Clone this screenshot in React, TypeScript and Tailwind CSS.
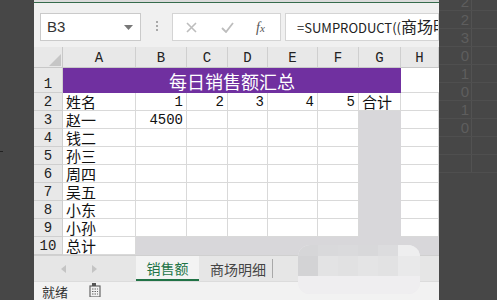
const mono = "font-['Liberation_Mono',monospace]"
const cjk = "font-['Noto_Sans_CJK_SC',sans-serif]"

const colW = ["w-[73px]", "w-[51px]", "w-[41px]", "w-[40px]", "w-[50px]", "w-[41px]", "w-[42px]", "flex-1"]
const letters = ["A", "B", "C", "D", "E", "F", "G", "H"]

const rows: string[][] = [
  ["姓名", "1", "2", "3", "4", "5", "合计", ""],
  ["赵一", "4500", "", "", "", "", "", ""],
  ["钱二"],
  ["孙三"],
  ["周四"],
  ["吴五"],
  ["小东"],
  ["小孙"],
  ["总计"],
]

const sideNums = ["2", "2", "3", "0", "1", "0", "1", "0", "", ""]

function FormulaBar() {
  return (
    <div className="h-[44px] bg-[#f0f0f0] flex items-start pt-[10px] pl-[6px]">
      <div className="w-[101px] h-[28px] bg-white border border-[#cacaca] flex items-center justify-between pl-[6px] pr-[7px]">
        <span className="font-['Liberation_Sans',sans-serif] text-[15px] text-[#333]">B3</span>
        <svg width="9" height="5" viewBox="0 0 9 5"><path d="M0 0h9L4.5 5z" fill="#777" /></svg>
      </div>
      <div className="ml-[15px] mt-[8px] flex flex-col gap-[2px]">
        <div className="w-[2px] h-[2px] bg-[#a8a8a8]" />
        <div className="w-[2px] h-[2px] bg-[#a8a8a8]" />
        <div className="w-[2px] h-[2px] bg-[#a8a8a8]" />
      </div>
      <div className="ml-[14px] w-[109px] h-[28px] bg-white border border-[#d4d4d4] flex items-center pl-[13px]">
        <svg width="11" height="11" viewBox="0 0 11 11"><path d="M1 1l9 9M10 1l-9 9" stroke="#bdbdbd" strokeWidth="1.6" /></svg>
        <svg className="ml-[24px]" width="13" height="11" viewBox="0 0 13 11"><path d="M1 6l4 4 7-9" stroke="#bdbdbd" strokeWidth="1.8" fill="none" /></svg>
        <span className="ml-[22px] font-['Liberation_Serif',serif] italic text-[14px] text-[#555]">f<span className="text-[11px]">x</span></span>
      </div>
      <div className="ml-[4px] flex-1 h-[28px] bg-white border border-[#d4d4d4] pl-[11px] overflow-hidden whitespace-nowrap flex items-center">
        <span className={`${cjk} text-[13px] leading-[18px] text-[#222]`}>
          =SUMPRODUCT((<span className="text-[16px]">商场明细</span>!
        </span>
      </div>
    </div>
  )
}

function HeaderRow() {
  return (
    <div className="h-[21px] flex bg-[#e8e8e8] border-b border-[#c8c8c8]">
      <div className="w-[29px] border-r border-[#c8c8c8] flex items-end justify-end pr-[1px] pb-[1px]">
        <svg width="12" height="12" viewBox="0 0 12 12"><path d="M12 0v12H0z" fill="#c6c6c6" /></svg>
      </div>
      {letters.map((l, i) => (
        <div key={l} className={`${colW[i]} border-r border-[#cfcfcf] flex items-end justify-center pb-[1px] ${mono} text-[14px] leading-[16px] text-[#222]`}>
          {l}
        </div>
      ))}
    </div>
  )
}

function RowNum({ n, h }: { n: number; h: string }) {
  return (
    <div className={`w-[29px] ${h} bg-[#e8e8e8] border-r border-b border-[#cfcfcf] flex items-end justify-center ${mono} text-[14px] leading-[16px] text-[#222]`}>
      {n}
    </div>
  )
}

function Grid() {
  return (
    <div className="flex flex-col">
      <div className="flex h-[25px]">
        <RowNum n={1} h="h-[25px]" />
        <div className={`w-[338px] bg-[#7030a0] flex items-center justify-center ${cjk} text-[18px] leading-[22px] text-white pt-[1px]`}>
          每日销售额汇总
        </div>
        <div className="flex-1 border-b border-[#d9d9d9]" />
      </div>
      {rows.map((r, ri) => {
        const last = ri === rows.length - 1
        return (
          <div key={ri} className="flex h-[18px]">
            <RowNum n={ri + 2} h="h-[18px]" />
            {colW.map((w, ci) => {
              const v = r[ci] ?? ""
              const grey = (ci === 6 && ri > 0) || (last && ci > 0)
              const isText = ci === 0 || v === "合计"
              return (
                <div
                  key={ci}
                  className={`${w} h-[18px] ${grey ? "bg-[#d8d7da]" : "bg-white border-r border-b border-[#d9d9d9]"} flex items-end overflow-hidden whitespace-nowrap ${
                    isText ? `${cjk} text-[15px] leading-[17px] pl-[3px] text-[#111]` : `${mono} text-[14px] leading-[16px] justify-end pr-[3px] text-[#111]`
                  }`}
                >
                  {v}
                </div>
              )
            })}
          </div>
        )
      })}
    </div>
  )
}

function TabBar() {
  return (
    <div className="h-[26px] bg-[#e6e6e6] flex border-t border-[#d0d0d0]">
      <div className="w-[102px] flex items-center">
        <svg className="ml-[27px]" width="5" height="8" viewBox="0 0 5 8"><path d="M5 0v8L0 4z" fill="#c4c4c4" /></svg>
        <svg className="ml-[26px]" width="5" height="8" viewBox="0 0 5 8"><path d="M0 0v8l5-4z" fill="#c4c4c4" /></svg>
      </div>
      <div className="w-[63px] bg-[#f3f3f3] flex flex-col">
        <div className={`flex-1 flex items-center justify-center ${cjk} text-[14px] leading-[18px] text-[#217346]`}>销售额</div>
        <div className="h-[2px] bg-[#217346]" />
      </div>
      <div className="w-[74px] flex items-center pl-[11px] border-r border-[#a8a8a8] my-[3px]">
        <span className={`${cjk} text-[14px] leading-[18px] text-[#444] whitespace-nowrap`}>商场明细</span>
      </div>
    </div>
  )
}

function StatusBar() {
  return (
    <div className="h-[19px] bg-[#f2f2f2] flex items-center border-t border-[#dcdcdc]">
      <span className={`ml-[8px] ${cjk} text-[13px] leading-[17px] text-[#333]`}>就绪</span>
      <svg className="ml-[21px] -mt-[3px]" width="12" height="14" viewBox="0 0 12 14">
        <rect x="1" y="3" width="10" height="11" fill="none" stroke="#666" strokeWidth="1.2" />
        <rect x="3" y="0" width="4" height="3" fill="#555" />
        <path d="M3 6h6M3 8.5h6M3 11h6" stroke="#666" strokeWidth="1" strokeDasharray="1.5 1" />
      </svg>
    </div>
  )
}

export default function App() {
  return (
    <div className="w-[497px] h-[300px] overflow-hidden flex bg-[#474747] relative">
      <div className="w-[34px] bg-[#474747] flex flex-col">
        <div className="mt-[151px] w-[3px] h-px bg-[#222]" />
      </div>

      <div className="w-[405px] flex flex-col bg-white">
        <div className="h-[2px] bg-[#dadada]" />
        <div className="h-px bg-[#356b4c]" />
        <FormulaBar />
        <HeaderRow />
        <Grid />
        <TabBar />
        <StatusBar />
      </div>

      <div className="w-[58px] overflow-hidden bg-[#474747]">
        <div className="-mt-[7px] flex flex-col">
          {sideNums.map((n, i) => (
            <div key={i} className="h-[18px] flex border-b border-[#4f4f4f]">
              <div className="w-[33px] border-r border-[#525252] flex items-center justify-end pr-[2px] font-['Liberation_Sans',sans-serif] text-[15px] leading-[17px] text-[#5e5e5e]">
                {n}
              </div>
            </div>
          ))}
        </div>
      </div>

      {/* blurred patch over bottom right */}
      <div className="absolute left-[298px] top-[245px] w-[122px] h-[49px] rounded-[12px] bg-[#ecebed] overflow-hidden flex flex-col">
        <div className="h-[11px] flex">
          <div className="w-[20px] bg-[#d6d6d8]" />
          <div className="w-[20px] bg-[#d9d9db]" />
          <div className="w-[20px] bg-[#dadadc]" />
          <div className="w-[20px] bg-[#d8d8da]" />
          <div className="w-[20px] bg-[#dcdcde]" />
          <div className="flex-1 bg-[#eeeeef]" />
        </div>
        <div className="h-[20px] flex">
          <div className="w-[20px] bg-[#d3d3d5]" />
          <div className="w-[20px] bg-[#e3e3e4]" />
          <div className="w-[20px] bg-[#e1e1e2]" />
          <div className="w-[20px] bg-[#e4e4e5]" />
          <div className="w-[20px] bg-[#e2e2e3]" />
          <div className="flex-1 bg-[#e9e9ea]" />
        </div>
        <div className="flex-1 bg-[#efeef0]" />
      </div>
    </div>
  )
}
